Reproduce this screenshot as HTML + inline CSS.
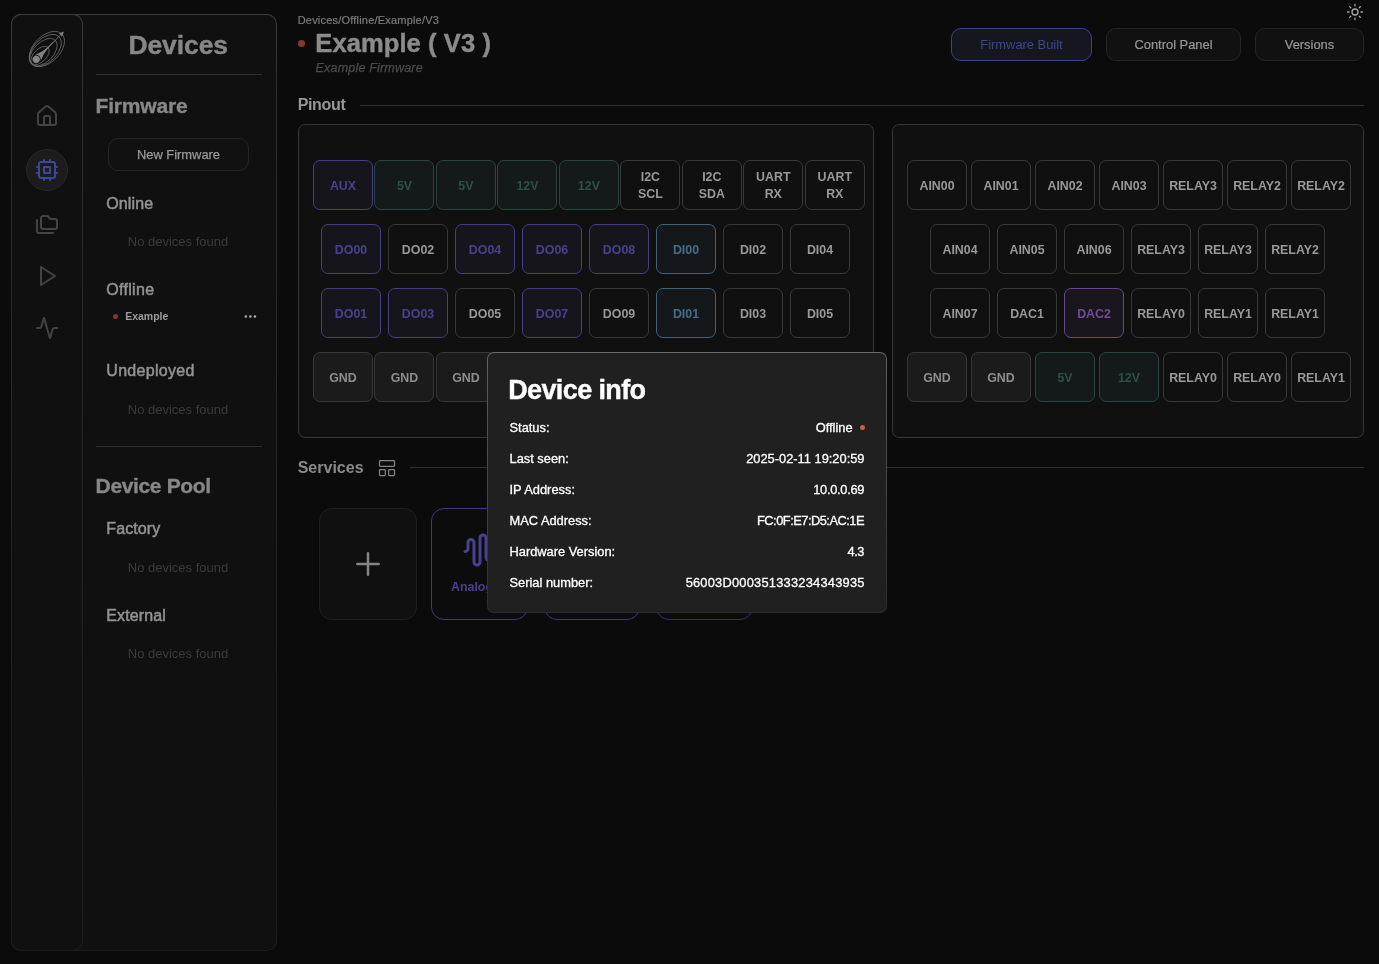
<!DOCTYPE html>
<html lang="en">
<head>
<meta charset="utf-8">
<title>Devices - Example (V3)</title>
<style>
*{box-sizing:border-box;margin:0;padding:0}
html,body{width:1379px;height:964px;overflow:hidden;background:#0b0b0b}
body{position:relative;font-family:"Liberation Sans",sans-serif;color:#999}
.abs, .sidebar span, .sidebar h1, .sidebar h2, .sidebar h3, .sidebar p, main > span, main > h1, main > h2, main > p, .modal span, .modal h2{position:absolute;white-space:nowrap;font-weight:400}
.sidebar,.rail{position:absolute;height:937px;border-radius:10px;background:linear-gradient(180deg,#3d3d3d 0,#303030 9%,#282828 40%,#212121 72%,#1c1c1c 100%)}
.sidebar{left:11px;top:14px;width:266px}
.rail{left:0;top:0;width:72px}
.sidebar::before,.rail::before{content:"";position:absolute;left:1px;top:1px;right:1px;bottom:1px;border-radius:9px;background:#101010}
.rail-in{position:absolute;left:1px;top:1px;width:70px;height:935px}
.rail svg{position:absolute}
.rail .active{position:absolute;left:14px;top:133.7px;width:42px;height:42px;border-radius:50%;background:#1c1c1c;border:1px solid #282828}
.side-body{position:absolute;left:-11px;top:-14px;width:1px;height:1px}
.hr{position:absolute;height:1px;background:#2e2e2e}
.btn{position:absolute;border:1px solid #252525;border-radius:10px;background:#111;display:flex;align-items:center;justify-content:center;color:#999;font-size:12.9px;white-space:nowrap}
.dot{position:absolute;border-radius:50%}
.app{position:absolute;left:0;top:0;width:1379px;height:964px;will-change:transform}
main{position:absolute;left:0;top:0;width:1379px;height:964px}
.panel{position:absolute;top:124px;height:314px;border:1px solid #373737;border-radius:7px;background:#101010}
.row{position:absolute;display:flex;justify-content:space-between;height:50px}
.pin{width:60px;height:50px;border:1px solid #393939;border-radius:7px;background:#101010;color:#999;font-weight:700;font-size:12.4px;line-height:17px;display:flex;align-items:center;justify-content:center;text-align:center;flex:none;padding-top:2px}
.pin.p{border-color:#453f84;background:#16151c;color:#48428e}
.pin.t{border-color:#2a4541;background:#141a1a;color:#2e4f4a}
.pin.b{border-color:#43617d;background:#15181b;color:#4a6a8a}
.pin.m{border-color:#66488c;background:#1a161e;color:#6e4d96}
.pin.g{border-color:#383838;background:#1b1b1b;color:#8e8e8e}
.card{position:absolute;top:508px;width:98px;height:112px;border-radius:13px;border:1px solid #3d3885;background:#0c0c0c}
.card.add{border-color:#202020;background:#101010}
.modal{position:absolute;left:487px;top:352px;width:400px;height:261px;border-radius:7px;background:linear-gradient(180deg,#686868 0,#5c5c5c 8%,#474747 50%,#2d2d2d 100%)}
.modal::before{content:"";position:absolute;left:1px;top:1px;right:1px;bottom:1px;border-radius:6px;background:#202020}
.modal-in{position:absolute;left:-487px;top:-352px;width:1px;height:1px}
</style>
</head>
<body>
<div class="app">
<aside class="sidebar">
<nav class="rail"><div class="rail-in">
<svg style="left:11px;top:10px" width="48" height="48" viewBox="23 25 48 48" fill="none" stroke="#6c6c6c" stroke-width="0.8">
<g transform="translate(36.2 59.4) rotate(-45)">
<ellipse cx="14.9" cy="0.2" rx="21.2" ry="13.1"/>
<ellipse cx="12.8" cy="0.1" rx="19.3" ry="11.7"/>
<ellipse cx="10.2" cy="0" rx="16.7" ry="9.8"/>
<ellipse cx="5.5" cy="0" rx="11.3" ry="6.3"/>
<path d="M1 -3.9 L4.2 -3.5 Q8 -1.5 14 -0.85 Q20 -0.4 35 -0.3 L35 0.3 Q20 0.4 14 0.85 Q8 1.5 4.2 3.5 L1 3.9 Z" fill="#838383" stroke="none"/>
<path d="M39.4 0 L34.4 -2.1 L34.4 2.1 Z" fill="#838383" stroke="none"/>
<circle cx="0" cy="0" r="4.1" fill="#868686" stroke="#101010" stroke-width="1"/>
</g>
</svg>
<svg style="left:23px;top:88.7px" width="24" height="24" viewBox="0 0 24 24" fill="none" stroke="#434343" stroke-width="2" stroke-linecap="round" stroke-linejoin="round"><path d="M15 21v-8a1 1 0 0 0-1-1h-4a1 1 0 0 0-1 1v8"/><path d="M3 10a2 2 0 0 1 .709-1.528l7-5.999a2 2 0 0 1 2.582 0l7 5.999A2 2 0 0 1 21 10v9a2 2 0 0 1-2 2H5a2 2 0 0 1-2-2z"/></svg>
<div class="active"></div>
<svg style="left:23px;top:142.7px" width="24" height="24" viewBox="0 0 24 24" fill="none" stroke="#3c479c" stroke-width="2" stroke-linecap="round" stroke-linejoin="round"><rect x="4" y="4" width="16" height="16" rx="2"/><rect x="9" y="9" width="6" height="6"/><path d="M15 2v2M15 20v2M2 15h2M2 9h2M20 15h2M20 9h2M9 2v2M9 20v2"/></svg>
<svg style="left:23px;top:196.5px" width="24" height="24" viewBox="0 0 24 24" fill="none" stroke="#434343" stroke-width="2" stroke-linecap="round" stroke-linejoin="round"><path d="M20 17a2 2 0 0 0 2-2V9a2 2 0 0 0-2-2h-3.9a2 2 0 0 1-1.69-.9l-.81-1.2a2 2 0 0 0-1.67-.9H8a2 2 0 0 0-2 2v9a2 2 0 0 0 2 2Z"/><path d="M2 8v11a2 2 0 0 0 2 2h14"/></svg>
<svg style="left:23px;top:249px" width="24" height="24" viewBox="0 0 24 24" fill="none" stroke="#434343" stroke-width="2" stroke-linecap="round" stroke-linejoin="round"><polygon points="6 3 20 12 6 21 6 3"/></svg>
<svg style="left:23px;top:301px" width="24" height="24" viewBox="0 0 24 24" fill="none" stroke="#434343" stroke-width="2" stroke-linecap="round" stroke-linejoin="round"><path d="M22 12h-2.48a2 2 0 0 0-1.93 1.46l-2.35 8.36a.25.25 0 0 1-.48 0L9.24 2.18a.25.25 0 0 0-.48 0l-2.35 8.36A2 2 0 0 1 4.49 12H2"/></svg>
</div></nav>
<div class="side-body">
<h1 style="top:29px;font-size:26.5px;line-height:32px;color:#878787;font-weight:700;-webkit-text-stroke:0.4px #878787;letter-spacing:-0.1px;left:78.19999999999999px;width:200px;text-align:center;">Devices</h1>
<div class="hr" style="left:96px;top:74px;width:166px"></div>
<h2 style="top:93px;font-size:21px;line-height:25px;color:#878787;font-weight:700;-webkit-text-stroke:0.35px #878787;letter-spacing:-0.2px;left:95.6px;">Firmware</h2>
<div class="btn" style="left:108px;top:138px;width:141px;height:33px;-webkit-text-stroke:0.25px #999">New Firmware</div>
<h3 style="top:194px;font-size:16px;line-height:19px;color:#939393;-webkit-text-stroke:0.5px #939393;letter-spacing:0.1px;left:106.3px;">Online</h3>
<p style="top:233px;font-size:13px;line-height:17px;color:#3b3b3b;left:78.0px;width:200px;text-align:center;">No devices found</p>
<h3 style="top:280px;font-size:16px;line-height:19px;color:#939393;-webkit-text-stroke:0.5px #939393;letter-spacing:0.3px;left:106.3px;">Offline</h3>
<div class="dot" style="left:112.9px;top:314px;width:5px;height:5px;background:#83382d"></div>
<span style="top:309px;font-size:10.5px;line-height:14px;color:#9c9c9c;font-weight:700;left:125.2px;">Example</span>
<svg class="abs" style="left:244px;top:314px" width="13" height="5" viewBox="0 0 13 5" fill="#ababab"><circle cx="1.9" cy="2.5" r="1.3"/><circle cx="6.4" cy="2.5" r="1.3"/><circle cx="10.9" cy="2.5" r="1.3"/></svg>
<h3 style="top:361px;font-size:16px;line-height:19px;color:#939393;-webkit-text-stroke:0.5px #939393;letter-spacing:0.3px;left:106.3px;">Undeployed</h3>
<p style="top:401px;font-size:13px;line-height:17px;color:#3b3b3b;left:78.0px;width:200px;text-align:center;">No devices found</p>
<div class="hr" style="left:96px;top:446px;width:166px"></div>
<h2 style="top:473px;font-size:21px;line-height:25px;color:#878787;font-weight:700;-webkit-text-stroke:0.35px #878787;letter-spacing:-0.36px;left:95.6px;">Device Pool</h2>
<h3 style="top:519px;font-size:16px;line-height:19px;color:#939393;-webkit-text-stroke:0.5px #939393;letter-spacing:0.1px;left:106.3px;">Factory</h3>
<p style="top:559px;font-size:13px;line-height:17px;color:#3b3b3b;left:78.0px;width:200px;text-align:center;">No devices found</p>
<h3 style="top:606px;font-size:16px;line-height:19px;color:#939393;-webkit-text-stroke:0.5px #939393;letter-spacing:0.1px;left:106.3px;">External</h3>
<p style="top:645px;font-size:13px;line-height:17px;color:#3b3b3b;left:78.0px;width:200px;text-align:center;">No devices found</p>
</div>
</aside>
<main>
<span style="top:13px;font-size:11px;line-height:14px;color:#7c7c7c;-webkit-text-stroke:0.2px #7c7c7c;letter-spacing:0.2px;left:297.7px;">Devices/Offline/Example/V3</span>
<div class="dot" style="left:298px;top:40px;width:7px;height:7px;background:#83392d"></div>
<h1 style="top:28px;font-size:25.5px;line-height:30px;color:#8b8b8b;font-weight:700;-webkit-text-stroke:0.45px #8b8b8b;letter-spacing:0.1px;left:315.3px;">Example ( V3 )</h1>
<p style="top:60px;font-size:12.6px;line-height:16px;color:#4c4c4c;font-style:italic;-webkit-text-stroke:0.25px #4c4c4c;letter-spacing:0.15px;left:315.5px;">Example Firmware</p>
<div class="btn" style="left:951px;top:28px;width:141px;height:33px;border-color:#38468a;background:#15161e;color:#3c488b">Firmware Built</div>
<div class="btn" style="left:1106px;top:28px;width:135px;height:33px;-webkit-text-stroke:0.2px #999">Control Panel</div>
<div class="btn" style="left:1255px;top:28px;width:109px;height:33px;-webkit-text-stroke:0.2px #999">Versions</div>
<svg class="abs" style="left:1346px;top:3px" width="18" height="18" viewBox="0 0 24 24" fill="none" stroke="#a8a8a8" stroke-width="1.7" stroke-linecap="round" stroke-linejoin="round"><circle cx="12" cy="12" r="4"/><path d="M12 2v2M12 20v2M4.93 4.93l1.41 1.41M17.66 17.66l1.41 1.41M2 12h2M20 12h2M6.34 17.66l-1.41 1.41M19.07 4.93l-1.41 1.41"/></svg>
<h2 style="top:95px;font-size:16px;line-height:19px;color:#979797;font-weight:700;letter-spacing:-0.35px;left:297.7px;">Pinout</h2>
<div class="hr" style="left:360px;top:105px;width:1004px;background:#303030"></div>
<section class="panel" style="left:298px;width:576px">
<div class="row" style="left:14px;top:35px;width:551.76px"><div class="pin p">AUX</div><div class="pin t">5V</div><div class="pin t">5V</div><div class="pin t">12V</div><div class="pin t">12V</div><div class="pin">I2C<br>SCL</div><div class="pin">I2C<br>SDA</div><div class="pin">UART<br>RX</div><div class="pin">UART<br>RX</div></div>
<div class="row" style="left:22px;top:99px;width:529px"><div class="pin p">DO00</div><div class="pin">DO02</div><div class="pin p">DO04</div><div class="pin p">DO06</div><div class="pin p">DO08</div><div class="pin b">DI00</div><div class="pin">DI02</div><div class="pin">DI04</div></div>
<div class="row" style="left:22px;top:163px;width:529px"><div class="pin p">DO01</div><div class="pin p">DO03</div><div class="pin">DO05</div><div class="pin p">DO07</div><div class="pin">DO09</div><div class="pin b">DI01</div><div class="pin">DI03</div><div class="pin">DI05</div></div>
<div class="row" style="left:14px;top:227px;width:551.76px"><div class="pin g">GND</div><div class="pin g">GND</div><div class="pin g">GND</div><div class="pin g">GND</div><div class="pin g">GND</div><div class="pin g">GND</div><div class="pin g">GND</div><div class="pin g">GND</div><div class="pin g">GND</div></div>
</section>
<section class="panel" style="left:892px;width:472px">
<div class="row" style="left:14px;top:35px;width:444px"><div class="pin">AIN00</div><div class="pin">AIN01</div><div class="pin">AIN02</div><div class="pin">AIN03</div><div class="pin">RELAY3</div><div class="pin">RELAY2</div><div class="pin">RELAY2</div></div>
<div class="row" style="left:37px;top:99px;width:395px"><div class="pin">AIN04</div><div class="pin">AIN05</div><div class="pin">AIN06</div><div class="pin">RELAY3</div><div class="pin">RELAY3</div><div class="pin">RELAY2</div></div>
<div class="row" style="left:37px;top:163px;width:395px"><div class="pin">AIN07</div><div class="pin">DAC1</div><div class="pin m">DAC2</div><div class="pin">RELAY0</div><div class="pin">RELAY1</div><div class="pin">RELAY1</div></div>
<div class="row" style="left:14px;top:227px;width:444px"><div class="pin g">GND</div><div class="pin g">GND</div><div class="pin t">5V</div><div class="pin t">12V</div><div class="pin">RELAY0</div><div class="pin">RELAY0</div><div class="pin">RELAY1</div></div>
</section>
<h2 style="top:458px;font-size:16px;line-height:19px;color:#8a8a8a;font-weight:700;left:297.7px;">Services</h2>
<svg class="abs" style="left:377px;top:458px" width="20" height="20" viewBox="0 0 24 24" fill="none" stroke="#858585" stroke-width="1.5" stroke-linecap="round" stroke-linejoin="round"><rect x="3" y="3" width="18" height="7" rx="1"/><rect x="3" y="14" width="7" height="7" rx="1"/><rect x="14" y="14" width="7" height="7" rx="1"/></svg>
<div class="hr" style="left:410px;top:467px;width:954px;background:#303030"></div>
<div class="card add" style="left:319px"><svg class="abs" style="left:35px;top:42px" width="26" height="26" viewBox="0 0 26 26" fill="none" stroke="#858585" stroke-width="2.5" stroke-linecap="round"><path d="M2.3 13h21.4M13 2.3v21.4"/></svg></div>
<div class="card" style="left:431px;width:96.5px;border-color:#3e397f"><svg class="abs" style="left:30px;top:23px" width="36" height="36" viewBox="0 0 24 24" fill="none" stroke="#47418f" stroke-width="2" stroke-linecap="round" stroke-linejoin="round"><path d="M2 13a2 2 0 0 0 2-2V7a2 2 0 0 1 4 0v13a2 2 0 0 0 4 0V4a2 2 0 0 1 4 0v13a2 2 0 0 0 4 0v-4a2 2 0 0 1 2-2"/></svg><span class="abs" style="left:0;width:94.5px;text-align:center;top:70px;font-size:12.4px;line-height:16px;font-weight:700;color:#47418f">Analog In</span></div>
<div class="card" style="left:543.8px;width:96.5px;border-color:#3e397f"><svg class="abs" style="left:30px;top:23px" width="36" height="36" viewBox="0 0 24 24" fill="none" stroke="#47418f" stroke-width="2" stroke-linecap="round" stroke-linejoin="round"><path d="M2 13a2 2 0 0 0 2-2V7a2 2 0 0 1 4 0v13a2 2 0 0 0 4 0V4a2 2 0 0 1 4 0v13a2 2 0 0 0 4 0v-4a2 2 0 0 1 2-2"/></svg><span class="abs" style="left:0;width:94.5px;text-align:center;top:70px;font-size:12.4px;line-height:16px;font-weight:700;color:#47418f">Analog Out</span></div>
<div class="card" style="left:656px;width:96.5px;border-color:#2f2a8a"><svg class="abs" style="left:30px;top:23px" width="36" height="36" viewBox="0 0 24 24" fill="none" stroke="#47418f" stroke-width="2" stroke-linecap="round" stroke-linejoin="round"><path d="M2 13a2 2 0 0 0 2-2V7a2 2 0 0 1 4 0v13a2 2 0 0 0 4 0V4a2 2 0 0 1 4 0v13a2 2 0 0 0 4 0v-4a2 2 0 0 1 2-2"/></svg><span class="abs" style="left:0;width:94.5px;text-align:center;top:70px;font-size:12.4px;line-height:16px;font-weight:700;color:#47418f">Digital In</span></div>
</main>
<div class="modal" role="dialog">
<div class="modal-in">
<h2 style="top:374px;font-size:27px;line-height:32px;color:#fff;font-weight:700;-webkit-text-stroke:0.4px #fff;letter-spacing:-0.62px;left:508.2px;">Device info</h2>
<span style="top:419px;font-size:12.85px;line-height:17px;color:#fff;-webkit-text-stroke:0.3px #fff;left:509.5px;">Status:</span>
<span style="top:419px;font-size:12.85px;line-height:17px;color:#fff;-webkit-text-stroke:0.3px #fff;left:652.6px;width:200px;text-align:right;">Offline</span>
<div class="dot" style="left:859.9px;top:425.1px;width:5px;height:5px;background:#c4604b"></div>
<span style="top:450px;font-size:12.85px;line-height:17px;color:#fff;-webkit-text-stroke:0.3px #fff;left:509.5px;">Last seen:</span>
<span style="top:450px;font-size:12.85px;line-height:17px;color:#fff;-webkit-text-stroke:0.3px #fff;left:564.5px;width:300px;text-align:right;">2025-02-11 19:20:59</span>
<span style="top:481px;font-size:12.85px;line-height:17px;color:#fff;-webkit-text-stroke:0.3px #fff;left:509.5px;">IP Address:</span>
<span style="top:481px;font-size:12.85px;line-height:17px;color:#fff;-webkit-text-stroke:0.3px #fff;letter-spacing:-0.29px;left:564.21px;width:300px;text-align:right;">10.0.0.69</span>
<span style="top:512px;font-size:12.85px;line-height:17px;color:#fff;-webkit-text-stroke:0.3px #fff;left:509.5px;">MAC Address:</span>
<span style="top:512px;font-size:12.85px;line-height:17px;color:#fff;-webkit-text-stroke:0.3px #fff;letter-spacing:-0.51px;left:563.99px;width:300px;text-align:right;">FC:0F:E7:D5:AC:1E</span>
<span style="top:543px;font-size:12.85px;line-height:17px;color:#fff;-webkit-text-stroke:0.3px #fff;left:509.5px;">Hardware Version:</span>
<span style="top:543px;font-size:12.85px;line-height:17px;color:#fff;-webkit-text-stroke:0.3px #fff;letter-spacing:-0.45px;left:564.05px;width:300px;text-align:right;">4.3</span>
<span style="top:574px;font-size:12.85px;line-height:17px;color:#fff;-webkit-text-stroke:0.3px #fff;left:509.5px;">Serial number:</span>
<span style="top:574px;font-size:12.85px;line-height:17px;color:#fff;-webkit-text-stroke:0.3px #fff;letter-spacing:0.23px;left:564.73px;width:300px;text-align:right;">56003D000351333234343935</span>
</div>
</div>
</div>
</body>
</html>
